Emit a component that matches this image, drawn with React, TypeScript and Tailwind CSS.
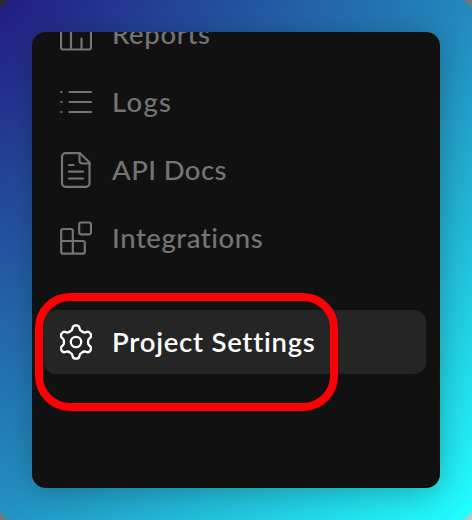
import type { ReactNode } from "react";

function Icon({ children }: { children: ReactNode }) {
  return (
    <svg
      className="h-9 w-8 shrink-0"
      viewBox="0 0 32 36"
      fill="none"
      stroke="currentColor"
      strokeWidth="2.200"
      strokeLinecap="round"
      strokeLinejoin="round"
    >
      {children}
    </svg>
  );
}

function ReportsIcon() {
  return (
    <Icon>
      <rect x="1" y="3" width="30" height="30.5" rx="2" />
      <path d="M11 3v30M21.500 22.500v10.500" />
    </Icon>
  );
}

function LogsIcon() {
  return (
    <Icon>
      <path d="M9.500 8h21.500M9.500 18h21.500M9.500 28h21.500M1.200 8h.3M1.200 18h.3M1.200 28h.3" />
    </Icon>
  );
}

function DocsIcon() {
  return (
    <Icon>
      <path d="M5.5 1.200h14.5l9.5 9.300v20.800a3.5 3.5 0 0 1-3.5 3.5H5.5a3.5 3.5 0 0 1-3.5-3.5v-26.600A3.5 3.5 0 0 1 5.5 1.200Z" />
      <path d="M19.5 1.200v7.300a3 3 0 0 0 3 3h7M9 13h4.500M9 19.700h14M9 26.500h14" />
    </Icon>
  );
}

function IntegrationsIcon() {
  return (
    <Icon>
      <rect x="19.200" y="2.500" width="11.800" height="11.800" rx="2" />
      <path d="M3.200 9h7.600a2 2 0 0 1 2 2v10h10a2 2 0 0 1 2 2v8.700a2 2 0 0 1-2 2H3.200a2 2 0 0 1-2-2V11a2 2 0 0 1 2-2ZM1.200 21h11.600v12.700" />
    </Icon>
  );
}

// Half of one cog tooth, from its tip to the valley; mirrored and turned for the rest.
const halfTooth = [
  [2.3, -16.7],
  [3.4, -15.6],
  [3.5, -13.6],
  [3.6, -11.9],
  [4.4, -11.2],
  [6.05, -10.48],
];

function turn(x: number, y: number, steps: number) {
  const a = (steps * Math.PI) / 3;
  return `${(x * Math.cos(a) - y * Math.sin(a)).toFixed(2)} ${(x * Math.sin(a) + y * Math.cos(a)).toFixed(2)}`;
}

const cog =
  "M0 -16.7" +
  [0, 1, 2, 3, 4, 5]
    .map((i) => {
      const down = halfTooth.map(([x, y]) => turn(x, y, i));
      const up = [...halfTooth.slice(0, 5).reverse(), [0, -16.7]].map(([x, y]) => turn(-x, y, i + 1));
      return `C${down.join(" ")}C${up.join(" ")}`;
    })
    .join("") +
  "Z";

function SettingsIcon() {
  return (
    <Icon>
      <g transform="translate(16 18)" strokeWidth="2.300">
        <path d={cog} />
        <circle r="5.200" />
      </g>
    </Icon>
  );
}

export default function App() {
  return (
    <div className="h-[520px] w-[472px] overflow-hidden bg-linear-to-br from-[#292929] via-[#777777] to-[#c2c2c2]">
      <main className="h-full rounded-xl bg-[linear-gradient(135deg,#241b82,#22ffff)] p-8 font-['Lato',sans-serif]">
        <div className="relative h-[456px] rounded-[14px] bg-[#111111] shadow-[0_4px_32px_rgba(0,0,0,0.28)]">
          <div className="h-full overflow-hidden rounded-[14px]">
            <nav className="-mt-[30px] flex flex-col gap-1 pr-3.5 pl-3 text-[27.5px] leading-8 font-medium text-[#747474]">
              <a className="flex h-16 items-center gap-5 px-4">
                <ReportsIcon />
                <span className="tracking-[0.65px]">Reports</span>
              </a>
              <a className="flex h-16 items-center gap-5 px-4">
                <LogsIcon />
                <span className="tracking-[1.3px]">Logs</span>
              </a>
              <a className="flex h-16 items-center gap-5 px-4">
                <DocsIcon />
                <span className="tracking-[0.4px]">API Docs</span>
              </a>
              <a className="flex h-16 items-center gap-5 px-4">
                <IntegrationsIcon />
                <span className="tracking-[0.55px]">Integrations</span>
              </a>
              <a className="mt-9 flex h-16 items-center gap-5 rounded-xl bg-[#252525] px-4 text-white">
                <SettingsIcon />
                <span className="font-semibold tracking-[0.75px]">Project Settings</span>
              </a>
            </nav>
          </div>
          <div className="absolute top-[261px] left-[3px] h-[118px] w-[303px] rounded-[35px] border-8 border-[#ff0006]" />
        </div>
      </main>
    </div>
  );
}
